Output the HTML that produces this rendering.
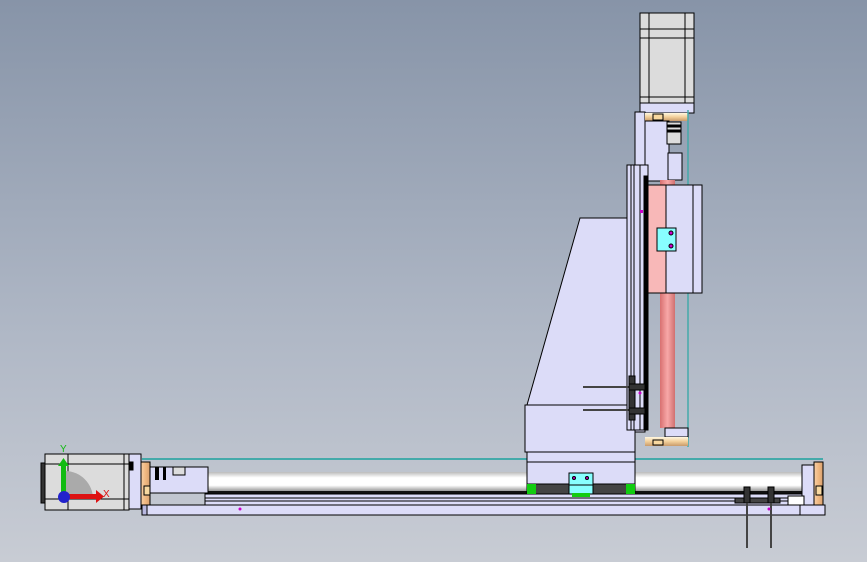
<!DOCTYPE html>
<html><head><style>
html,body{margin:0;padding:0;width:867px;height:562px;overflow:hidden}
body{background:linear-gradient(#8794a8,#b0b8c6 60%,#c8ccd4)}
svg{position:absolute;left:0;top:0}
</style></head><body>
<svg width="867" height="562" viewBox="0 0 867 562" stroke="#000" stroke-width="1">
<defs>
<linearGradient id="tube" x1="0" y1="0" x2="0" y2="1"><stop offset="0" stop-color="#bbb"/><stop offset=".3" stop-color="#fff"/><stop offset=".7" stop-color="#fff"/><stop offset="1" stop-color="#999"/></linearGradient>
<linearGradient id="gold" x1="0" y1="0" x2="0" y2="1"><stop offset="0" stop-color="#fff8e0"/><stop offset=".5" stop-color="#f2cf9a"/><stop offset="1" stop-color="#c89a6a"/></linearGradient>
<linearGradient id="goldv" x1="0" y1="0" x2="1" y2="0"><stop offset="0" stop-color="#f7d0a8"/><stop offset=".5" stop-color="#f0b880"/><stop offset="1" stop-color="#d8a070"/></linearGradient>
<linearGradient id="rod" x1="0" y1="0" x2="1" y2="0"><stop offset="0" stop-color="#d87070"/><stop offset=".5" stop-color="#f8a8a8"/><stop offset="1" stop-color="#d07070"/></linearGradient>
</defs>
<!-- X axis background parts -->
<line x1="142" y1="459" x2="823" y2="459" stroke="#4aa" stroke-width="2"/>
<rect x="205" y="472" width="603" height="19" fill="url(#tube)" stroke="none"/>
<rect x="205" y="491" width="600" height="3" fill="#111" stroke="none"/>
<rect x="205" y="494" width="600" height="11" fill="#dcdcf8"/>
<line x1="205" y1="498" x2="805" y2="498"/><line x1="205" y1="501" x2="805" y2="501"/>
<rect x="142" y="505" width="683" height="10" fill="#dcdcf8"/>
<rect x="142" y="505" width="5" height="10" fill="#b8b8e0"/>
<!-- Z motor -->
<rect x="640" y="13" width="54" height="90" fill="#dcdcdc"/>
<line x1="649" y1="13" x2="649" y2="103"/><line x1="685" y1="13" x2="685" y2="103"/>
<line x1="640" y1="29" x2="694" y2="29"/><line x1="640" y1="38" x2="694" y2="38"/><line x1="640" y1="97" x2="694" y2="97"/>
<rect x="640" y="103" width="54" height="10" fill="#dcdcf8"/>
<!-- column -->
<rect x="635" y="112" width="10" height="320" fill="#dcdcf8"/>
<rect x="645" y="113" width="43" height="8" fill="url(#gold)" stroke="none"/>
<rect x="653" y="114" width="10" height="6" fill="#f8d8a0"/>
<rect x="645" y="121" width="24" height="60" fill="#dcdcf8"/>
<rect x="667" y="122" width="14" height="22" fill="#ddd"/>
<rect x="668" y="125" width="13" height="2" fill="#000"/><rect x="668" y="130" width="13" height="2" fill="#000"/>
<rect x="668" y="153" width="14" height="27" fill="#dcdcf8"/>
<line x1="688" y1="110" x2="688" y2="447" stroke="#4aa" stroke-width="1.5"/>
<!-- big trapezoid plate -->
<path d="M580 218 L628 218 L628 405 L527 405 Z" fill="#dcdcf8"/>
<rect x="525" y="405" width="110" height="47" fill="#dcdcf8"/>
<rect x="527" y="452" width="108" height="32" fill="#dcdcf8"/>
<line x1="527" y1="462" x2="635" y2="462"/>
<rect x="527" y="484" width="108" height="10" fill="#444"/>
<rect x="527" y="484" width="9" height="10" fill="#1c1" stroke="none"/>
<rect x="626" y="484" width="9" height="10" fill="#1c1" stroke="none"/>
<rect x="569" y="473" width="24" height="13" fill="#8ff"/>
<rect x="569" y="485" width="24" height="9" fill="#8ff"/>
<rect x="572" y="493" width="18" height="4" fill="#1c1" stroke="none"/>
<circle cx="574" cy="478" r="1.5" fill="#c0c"/><circle cx="587" cy="478" r="1.5" fill="#c0c"/>
<!-- rail -->
<rect x="627" y="165" width="21" height="265" fill="#dcdcf8"/>
<line x1="631" y1="165" x2="631" y2="430"/><line x1="634" y1="165" x2="634" y2="430"/><line x1="640" y1="165" x2="640" y2="430"/>
<rect x="644" y="176" width="4" height="254" fill="#000"/>
<rect x="640" y="210" width="3" height="3" fill="#c0c" stroke="none"/>
<!-- pink rod -->
<rect x="660" y="180" width="15" height="248" fill="url(#rod)" stroke="none"/>
<rect x="648" y="185" width="19" height="108" fill="#f8b8b8"/>
<rect x="666" y="185" width="36" height="108" fill="#dcdcf8"/>
<line x1="693" y1="185" x2="693" y2="293"/>
<rect x="657" y="228" width="19" height="23" fill="#8ff"/>
<circle cx="671" cy="233" r="2" fill="#c0c"/><circle cx="671" cy="246" r="2" fill="#c0c"/>
<rect x="665" y="428" width="23" height="9" fill="#dcdcf8"/>
<rect x="645" y="437" width="43" height="9" fill="url(#gold)" stroke="none"/>
<rect x="653" y="440" width="10" height="5" fill="#f8d8a0"/>
<!-- clamps on Z -->
<line x1="583" y1="387" x2="630" y2="387" stroke="#444" stroke-width="2"/>
<line x1="583" y1="410" x2="630" y2="410" stroke="#444" stroke-width="2"/>
<rect x="629" y="376" width="6" height="44" fill="#333"/>
<rect x="629" y="384" width="16" height="6" fill="#333"/><rect x="629" y="408" width="16" height="6" fill="#333"/>
<circle cx="640" cy="393" r="1.5" fill="#c0c" stroke="none"/>
<!-- X motor -->
<rect x="45" y="454" width="84" height="56" fill="#dcdcdc"/>
<line x1="45" y1="464" x2="129" y2="464"/><line x1="45" y1="499" x2="129" y2="499"/>
<line x1="68" y1="454" x2="68" y2="510"/><line x1="124" y1="454" x2="124" y2="510"/>
<rect x="41" y="463" width="4" height="40" fill="#333"/>
<path d="M65 471 A28 28 0 0 1 93 499 L65 499 Z" fill="#aaa" stroke="none"/>
<rect x="129" y="454" width="12" height="55" fill="#dcdcf8"/>
<rect x="130" y="462" width="3" height="8" fill="#000"/>
<rect x="141" y="462" width="9" height="43" fill="url(#goldv)"/>
<rect x="144" y="486" width="6" height="9" fill="#f8d8a0"/>
<rect x="150" y="467" width="58" height="26" fill="#dcdcf8"/>
<rect x="155" y="467" width="4" height="13" fill="#000" stroke="none"/><rect x="163" y="467" width="3" height="13" fill="#000" stroke="none"/>
<rect x="173" y="467" width="12" height="8" fill="#ddd"/>
<!-- triad -->
<rect x="61" y="464" width="5" height="28" fill="#1b1" stroke="none"/>
<path d="M58 466 L63.5 458 L69 466 Z" fill="#1b1" stroke="none"/>
<rect x="66" y="494" width="30" height="5" fill="#d11" stroke="none"/>
<path d="M96 490 L104 496.5 L96 503 Z" fill="#d11" stroke="none"/>
<circle cx="64" cy="497" r="6" fill="#22c" stroke="none"/>
<text x="60" y="452" font-family="Liberation Sans,sans-serif" font-size="10" fill="#1b1" stroke="none">Y</text>
<text x="103" y="497" font-family="Liberation Sans,sans-serif" font-size="10" fill="#d11" stroke="none">X</text>
<!-- right end -->
<rect x="802" y="465" width="12" height="40" fill="#dcdcf8"/>
<rect x="814" y="462" width="9" height="43" fill="url(#goldv)"/>
<rect x="816" y="486" width="6" height="9" fill="#f8d8a0"/>
<rect x="788" y="496" width="16" height="9" fill="#fff"/>
<rect x="800" y="505" width="25" height="10" fill="#dcdcf8"/>
<!-- X clamps -->
<rect x="735" y="498" width="45" height="5" fill="#444"/>
<rect x="744" y="487" width="6" height="16" fill="#333"/><rect x="768" y="487" width="6" height="16" fill="#333"/>
<line x1="747" y1="503" x2="747" y2="548" stroke="#444" stroke-width="2"/>
<line x1="771" y1="503" x2="771" y2="548" stroke="#444" stroke-width="2"/>
<circle cx="240" cy="509" r="1.5" fill="#c0c" stroke="none"/>
<circle cx="769" cy="509" r="1.5" fill="#c0c" stroke="none"/>
</svg>
</body></html>
